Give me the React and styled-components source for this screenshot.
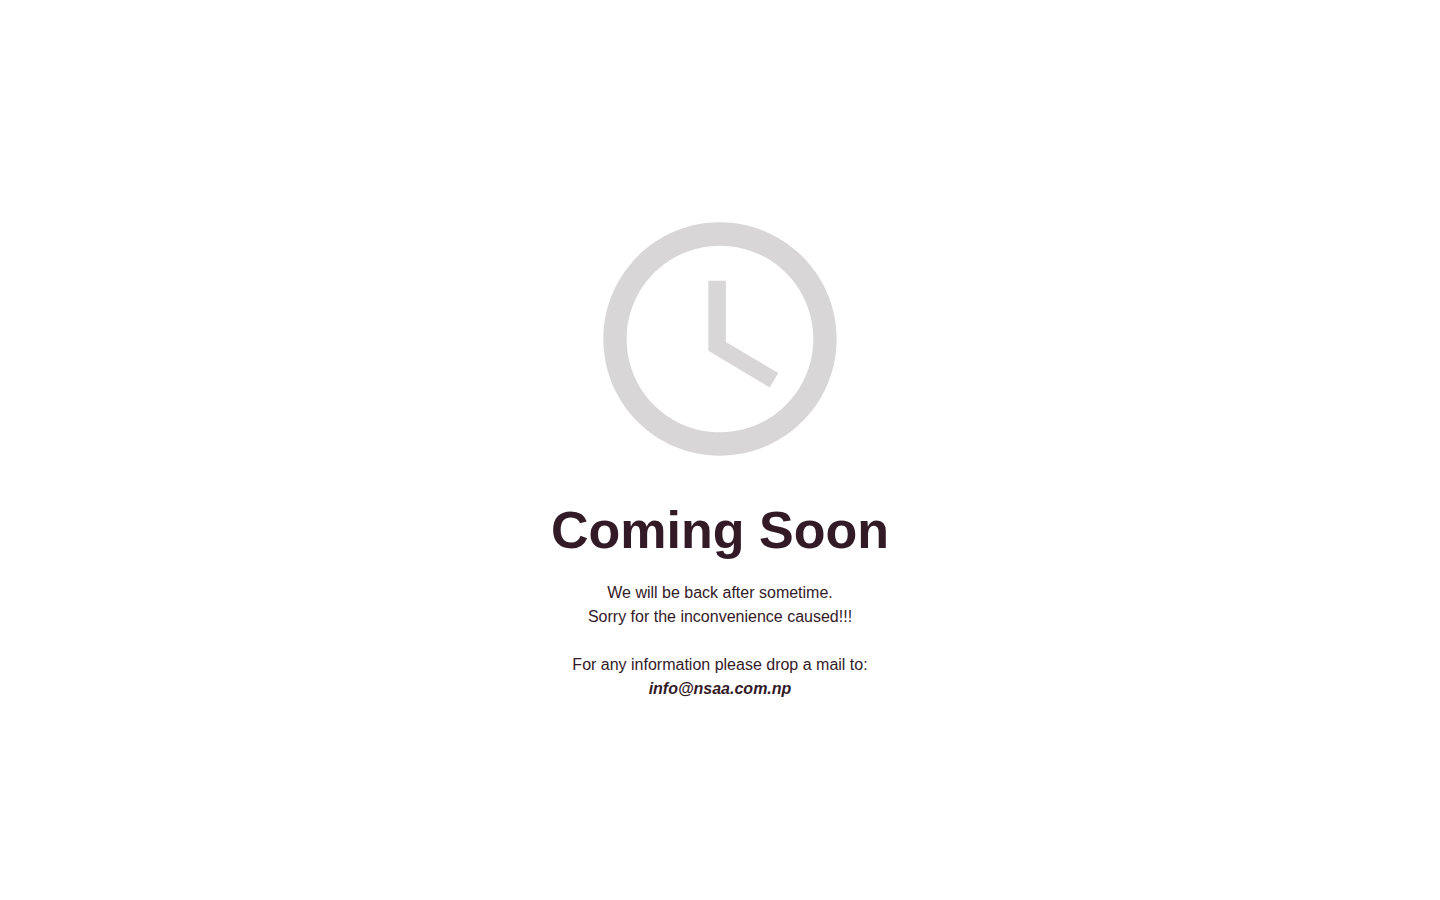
import React from "react";
import styled, { createGlobalStyle } from "styled-components";

const GlobalStyle = createGlobalStyle`
  *, *::before, *::after { box-sizing: border-box; }
  body {
    margin: 0;
    background: #fff;
    color: #331a27;
    font-family: "Liberation Sans", Arial, sans-serif;
    font-size: 16px;
    line-height: 24px;
  }
`;

const Page = styled.main`
  min-height: 100vh;
  display: flex;
  flex-direction: column;
  align-items: center;
  justify-content: center;
  text-align: center;
`;

const ClockIcon = styled.svg`
  display: block;
  width: 280px;
  height: 280px;
  margin-bottom: 20px;
  fill: #d8d6d7;
`;

const Title = styled.h1`
  margin: 0 0 20px;
  font-size: 52px;
  line-height: 62px;
  font-weight: 700;
`;

const Message = styled.p`
  margin: 0 0 24px;

  &:last-child { margin-bottom: 0; }
`;

const MailLink = styled.a`
  color: inherit;
  font-style: italic;
  font-weight: 700;
  text-decoration: none;
`;

export default function App() {
  return (
    <>
      <GlobalStyle />
      <Page>
        <ClockIcon viewBox="0 0 24 24" aria-hidden="true">
          <path d="M11.99 2C6.47 2 2 6.48 2 12s4.47 10 9.99 10C17.52 22 22 17.52 22 12S17.52 2 11.99 2zM12 20c-4.42 0-8-3.58-8-8s3.58-8 8-8 8 3.58 8 8-3.58 8-8 8z" />
          <path d="M12.5 7H11v6l5.25 3.15.75-1.23-4.5-2.67z" />
        </ClockIcon>
        <Title>Coming Soon</Title>
        <Message>
          We will be back after sometime.
          <br />
          Sorry for the inconvenience caused!!!
        </Message>
        <Message>
          For any information please drop a mail to:
          <br />
          <MailLink href="mailto:info@nsaa.com.np">info@nsaa.com.np</MailLink>
        </Message>
      </Page>
    </>
  );
}
